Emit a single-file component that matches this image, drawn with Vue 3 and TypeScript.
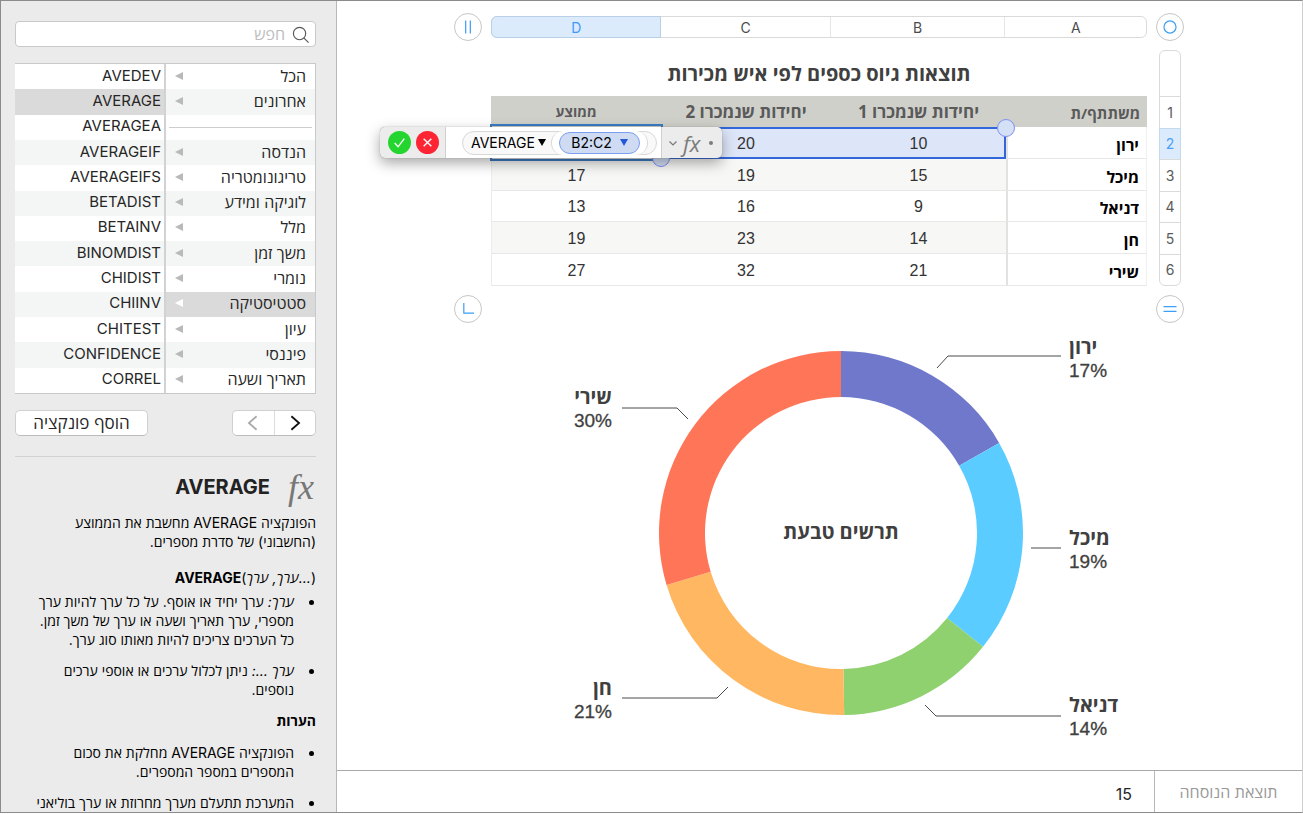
<script setup lang="ts">
interface Category { label: string; active?: boolean; separator?: boolean }
interface Person { name: string; first: number; second: number; average: number | null }
interface Slice {
  name: string
  value: number
  share: string
  color: string
  leader: string
  x: number
  y: number
  anchor: 'start' | 'end'
}

const functions: string[] = [
  'AVEDEV', 'AVERAGE', 'AVERAGEA', 'AVERAGEIF', 'AVERAGEIFS', 'BETADIST', 'BETAINV',
  'BINOMDIST', 'CHIDIST', 'CHIINV', 'CHITEST', 'CONFIDENCE', 'CORREL',
]

const categories: Category[] = [
  { label: 'הכל' },
  { label: 'אחרונים' },
  { label: '', separator: true },
  { label: 'הנדסה' },
  { label: 'טריגונומטריה' },
  { label: 'לוגיקה ומידע' },
  { label: 'מלל' },
  { label: 'משך זמן' },
  { label: 'נומרי' },
  { label: 'סטטיסטיקה', active: true },
  { label: 'עיון' },
  { label: 'פיננסי' },
  { label: 'תאריך ושעה' },
]

const columns: string[] = ['A', 'B', 'C', 'D']
const rowNumbers: number[] = [1, 2, 3, 4, 5, 6]

const people: Person[] = [
  { name: 'ירון', first: 10, second: 20, average: null },
  { name: 'מיכל', first: 15, second: 19, average: 17 },
  { name: 'דניאל', first: 9, second: 16, average: 13 },
  { name: 'חן', first: 14, second: 23, average: 19 },
  { name: 'שירי', first: 21, second: 32, average: 27 },
]

const slices: Slice[] = [
  { name: 'ירון', value: 15, share: '17%', color: '#6f78cb', leader: '600,45 611,33 724,33', x: 732, y: 31, anchor: 'start' },
  { name: 'מיכל', value: 17, share: '19%', color: '#5accff', leader: '694,225 724,225', x: 732, y: 222, anchor: 'start' },
  { name: 'דניאל', value: 12.5, share: '14%', color: '#8fd16f', leader: '588,382 599,393 724,393', x: 732, y: 389, anchor: 'start' },
  { name: 'חן', value: 18.5, share: '21%', color: '#ffb761', leader: '391,364 380,375 285,375', x: 275, y: 372, anchor: 'end' },
  { name: 'שירי', value: 26.5, share: '30%', color: '#ff7558', leader: '351,96 340,85 285,85', x: 275, y: 81, anchor: 'end' },
]

const center = { x: 504, y: 210 }
const outer = 182
const inner = 136
const total = slices.reduce((sum, slice) => sum + slice.value, 0)

function point(radius: number, turn: number): string {
  const angle = turn * 2 * Math.PI
  return `${center.x + radius * Math.sin(angle)} ${center.y - radius * Math.cos(angle)}`
}

const arcs = slices.map((slice, index) => {
  const start = slices.slice(0, index).reduce((sum, item) => sum + item.value, 0) / total
  const end = start + slice.value / total
  return {
    color: slice.color,
    d: `M${point(outer, start)} A${outer} ${outer} 0 0 1 ${point(outer, end)} L${point(inner, end)} A${inner} ${inner} 0 0 0 ${point(inner, start)}Z`,
  }
})
</script>

<template>
  <div class="window" dir="rtl">
    <div class="workspace">
      <main class="canvas">
        <section class="sheet">
          <button class="knob" aria-label="בחירת הטבלה">
            <svg viewBox="0 0 28 28"><circle cx="14" cy="14" r="6.5" /></svg>
          </button>
          <div class="column-bar">
            <button v-for="column in columns" :key="column" :class="{ current: column === 'D' }">{{ column }}</button>
          </div>
          <button class="knob" aria-label="הוספת עמודה">
            <svg viewBox="0 0 28 28"><path d="M11.5 7v14M16.5 7v14" /></svg>
          </button>

          <div class="row-bar">
            <span></span>
            <button v-for="row in rowNumbers" :key="row" :class="{ current: row === 2 }">{{ row }}</button>
          </div>
          <div class="table-area">
            <h2>תוצאות גיוס כספים לפי איש מכירות</h2>
            <table>
              <colgroup>
                <col class="col-a" /><col class="col-b" /><col class="col-c" /><col class="col-d" />
              </colgroup>
              <thead>
                <tr>
                  <th scope="col">משתתף/ת</th>
                  <th scope="col" class="units">יחידות שנמכרו 1</th>
                  <th scope="col" class="units">יחידות שנמכרו 2</th>
                  <th scope="col" class="mean">ממוצע</th>
                </tr>
              </thead>
              <tbody>
                <tr v-for="person in people" :key="person.name">
                  <th scope="row">{{ person.name }}</th>
                  <td :class="{ 'range-start': person.average === null }">{{ person.first }}</td>
                  <td :class="{ 'range-end': person.average === null }">{{ person.second }}</td>
                  <td v-if="person.average !== null">{{ person.average }}</td>
                  <td v-else class="editing">
                    <div class="editor" dir="ltr">
                      <div class="actions">
                        <button class="accept" aria-label="אישור">
                          <svg viewBox="0 0 24 24"><path d="M7 12.5l3.5 4L17 8" /></svg>
                        </button>
                        <button class="cancel" aria-label="ביטול">
                          <svg viewBox="0 0 24 24"><path d="M8 8l8 8M16 8l-8 8" /></svg>
                        </button>
                      </div>
                      <div class="formula">
                        <div class="call">
                          <button class="name">AVERAGE<i></i></button>
                          <div class="argument"><button class="token">B2:C2<i></i></button></div>
                        </div>
                      </div>
                      <div class="mode">
                        <svg viewBox="0 0 10 10"><path d="M1.5 3.5L5 7l3.5-3.5" /></svg>
                        <em>fx</em>
                        <b></b>
                      </div>
                    </div>
                  </td>
                </tr>
              </tbody>
            </table>
          </div>
          <span></span>

          <button class="knob" aria-label="הוספת שורה">
            <svg viewBox="0 0 28 28"><path d="M7 11.5h14M7 16.5h14" /></svg>
          </button>
          <span></span>
          <button class="knob" aria-label="הוספת שורה ועמודה">
            <svg viewBox="0 0 28 28"><path d="M9.5 7.5v11h11" /></svg>
          </button>
        </section>

        <svg class="chart" viewBox="0 0 965 447" direction="ltr" role="img" aria-label="תרשים טבעת">
          <path v-for="arc in arcs" :key="arc.color" :d="arc.d" :fill="arc.color" />
          <text class="chart-title" :x="center.x" :y="center.y + 6" text-anchor="middle">תרשים טבעת</text>
          <g v-for="slice in slices" :key="slice.name">
            <polyline :points="slice.leader" />
            <text class="slice-name" :x="slice.x" :y="slice.y" :text-anchor="slice.anchor">{{ slice.name }}</text>
            <text class="slice-share" :x="slice.x" :y="slice.y + 23" :text-anchor="slice.anchor">{{ slice.share }}</text>
          </g>
        </svg>
      </main>
      <footer class="result">
        <span class="result-label">תוצאת הנוסחה</span>
        <output>15</output>
      </footer>
    </div>

    <aside class="sidebar">
      <label class="search">
        <svg viewBox="0 0 18 18"><circle cx="8" cy="8" r="6.5" /><path d="M12.5 12.5l5 5" /></svg>
        <input type="text" placeholder="חפש" aria-label="חפש" />
      </label>
      <div class="browser">
        <ul class="categories">
          <li v-for="(category, index) in categories" :key="index" :class="{ active: category.active }">
            <hr v-if="category.separator" />
            <button v-else>{{ category.label }}<i></i></button>
          </li>
        </ul>
        <ul class="functions">
          <li v-for="name in functions" :key="name" :class="{ active: name === 'AVERAGE' }">
            <button>{{ name }}</button>
          </li>
        </ul>
      </div>
      <div class="toolbar">
        <div class="history">
          <button aria-label="הקודם"><svg viewBox="0 0 20 20"><path d="M6 2.5l8.5 7.5L6 17.5" /></svg></button>
          <button aria-label="הבא" disabled><svg viewBox="0 0 20 20"><path d="M14 2.5L5.5 10l8.5 7.5" /></svg></button>
        </div>
        <button class="insert">הוסף פונקציה</button>
      </div>
      <article class="help">
        <h1><em>fx</em><span>AVERAGE</span></h1>
        <p>הפונקציה AVERAGE מחשבת את הממוצע (החשבוני) של סדרת מספרים.</p>
        <p class="signature" dir="ltr"><b>AVERAGE</b>(<i dir="rtl">ערך, ערך</i><i>…</i>)</p>
        <ul>
          <li><i>ערך:</i> ערך יחיד או אוסף. על כל ערך להיות ערך מספרי, ערך תאריך ושעה או ערך של משך זמן. כל הערכים צריכים להיות מאותו סוג ערך.</li>
          <li><i>ערך …:</i> ניתן לכלול ערכים או אוספי ערכים נוספים.</li>
        </ul>
        <h3>הערות</h3>
        <ul>
          <li>הפונקציה AVERAGE מחלקת את סכום המספרים במספר המספרים.</li>
          <li>המערכת תתעלם מערך מחרוזת או ערך בוליאני</li>
        </ul>
      </article>
    </aside>
  </div>
</template>

<style>
body { margin: 0; }
</style>

<style scoped>
* { box-sizing: border-box; }
button, input { font: inherit; color: inherit; margin: 0; padding: 0; border: 0; background: none; }
ul { list-style: none; margin: 0; padding: 0; }
svg { display: block; fill: none; }

.window {
  display: flex;
  height: calc(100vh - 1px);
  overflow: hidden;
  border: 1px solid #8b8a8c;
  border-right-color: #cfcfcf;
  background: #fff;
  font: 14px/19px Inter, "Open Sans", sans-serif;
  color: #262626;
}

.workspace { flex: 1; min-width: 0; display: flex; flex-direction: column; }
.canvas { flex: 1; min-height: 0; display: flex; flex-direction: column; }

.sheet {
  display: grid;
  grid-template-columns: 28px 1fr 28px;
  gap: 9px;
  padding: 12px 118px 0 117px;
}
.knob {
  width: 28px;
  height: 28px;
  border: 1px solid #c6c6c6;
  border-radius: 50%;
  background: #fff;
}
.knob svg { width: 26px; height: 26px; stroke: #3b9ff5; stroke-width: 1.3; }

.column-bar {
  align-self: center;
  height: 22px;
  display: grid;
  grid-template-columns: 141fr 175fr 170fr 170fr;
  border: 1px solid #dadada;
  border-radius: 6px;
  font-size: 14px;
  color: #4c4c4c;
}
.column-bar button + button { border-right: 1px solid #e6e6e6; }
.column-bar .current {
  margin: -1px 0 -1px -1px;
  border: 1px solid #b8cfe8;
  border-radius: 6px 0 0 6px;
  background: #dcebfc;
  color: #3e9bfa;
}

.row-bar {
  justify-self: center;
  width: 22px;
  display: grid;
  grid-template-rows: 45px repeat(6, 1fr);
  border: 1px solid #dadada;
  border-radius: 6px;
  font-size: 14px;
  color: #5a5a5a;
}
.row-bar button { border-top: 1px solid #dadada; }
.row-bar .current { margin: 0 -1px; border: 1px solid #c3d9ee; border-bottom: 0; background: #dcebfc; color: #4aa0fa; }

.table-area { display: flex; flex-direction: column; }
h2 { margin: 0; height: 46px; font: 700 20px/48px "Open Sans", sans-serif; color: #404040; text-align: center; }
table { width: 100%; height: 190px; table-layout: fixed; border-collapse: separate; border-spacing: 0; font: 16px/20px "Liberation Sans", sans-serif; }
.col-a { width: 141px; }
.col-b { width: 175px; }
.col-c, .col-d { width: 170px; }
th, td { height: 31px; padding: 0; text-align: center; border-bottom: 1px solid #e8e8e8; }
tbody td { padding-top: 3px; color: #333; }
thead th { background: #d0d0cb; border-bottom: 0; color: #5a5a5a; font: 700 15px/20px "Open Sans", sans-serif; }
thead .units { font-size: 17px; }
thead .mean { font-size: 14px; }
thead th:first-child, tbody th { padding: 3px 7px 0 0; text-align: right; }
tbody th { padding-top: 5px; border-right: 1px solid #f0f0f0; border-left: 2px solid #e2e2e0; font: 700 16px/20px "Open Sans", sans-serif; color: #000; }
tbody tr:nth-child(even) td { background: #f7f7f5; }
tbody td:last-child { border-left: 1px solid #ececec; }

tbody td.range-start, tbody td.range-end { position: relative; background: #dde6f9; border-bottom: 0; box-shadow: inset 0 2px #3266dd, inset 0 -2px #3266dd; }
tbody td.range-start { box-shadow: inset 0 2px #3266dd, inset 0 -2px #3266dd, inset -2px 0 #3266dd; }
td.range-start::after, td.editing::after {
  content: "";
  position: absolute;
  width: 16px;
  height: 16px;
  border: 1px solid #7f8ff0;
  border-radius: 50%;
  background: #d3e0f6;
}
td.range-start::after { top: -8px; right: -9px; }
td.editing { position: relative; z-index: 2; }
td.editing::after { right: -9px; bottom: -9px; z-index: -1; }
td.editing::before { content: ""; position: absolute; inset: -3px -2px; border: 2px solid #3a7cc4; z-index: -1; }

.editor {
  position: absolute;
  top: 0;
  right: -61px;
  width: 342px;
  height: 31px;
  display: flex;
  border-radius: 5px;
  background: #ececec;
  box-shadow: 0 0 1px #777, 0 5px 14px rgba(0, 0, 0, 0.35);
  font: 14px/20px Inter, sans-serif;
  color: #000;
}
.actions { width: 66px; display: flex; gap: 5px; align-items: center; padding-left: 8px; border-right: 1px solid #d0d0d0; }
.actions button { width: 23px; height: 23px; border-radius: 50%; }
.actions svg { width: 23px; height: 23px; stroke: #fff; stroke-width: 1.4; }
.accept { background: #25d52f; }
.cancel { background: #fd2434; }
.formula { flex: 1; display: flex; align-items: center; padding: 0 4px 0 16px; background: #fff; border-right: 1px solid #d0d0d0; }
.call { flex: 1; height: 24px; display: flex; align-items: center; padding: 0 8px; border: 1px solid #d8d8d8; border-radius: 12px; background: #f9f9f9; }
.name { flex: 1; text-align: left; white-space: nowrap; }
.editor i { display: inline-block; margin-left: 3px; vertical-align: 2px; border: 4px solid transparent; border-top: 7px solid #000; border-bottom: 0; }
.argument { height: 24px; margin: -1px 0; padding: 1px 7px; border: solid #d8d8d8; border-width: 0 1px; border-radius: 12px; background: #fff; }
.token { display: block; width: 81px; height: 22px; border: 1px solid #7c9eee; border-radius: 11px; background: #cfdbf3; }
.editor .token i { margin-left: 8px; border-top-color: #2158d6; }
.mode { width: 60px; display: flex; align-items: center; color: #7c7c7c; padding-left: 6px; }
.mode svg { width: 10px; height: 10px; stroke: #777; stroke-width: 1.2; }
.mode em { margin-left: 5px; font: italic 22px/24px "Open Sans", sans-serif; }
.mode b { width: 4px; height: 4px; margin-left: 9px; border-radius: 50%; background: #7c7c7c; }

.chart { flex: 1; width: 100%; min-height: 0; }
.chart text { direction: ltr; fill: #404040; }
.chart-title, .slice-name { font: 700 20px "Open Sans", sans-serif; }
.slice-share { font: 19px "Liberation Sans", sans-serif; stroke: #404040; stroke-width: 0.3; }
polyline { stroke: #4a4a4a; stroke-width: 1; }

.result { height: 42px; display: flex; border-top: 1px solid #a8a8a8; line-height: 42px; }
.result-label { width: 148px; text-align: center; border-left: 1px solid #b8b8b8; color: #999; font-size: 16px; }
.result output { padding: 2px 22px 0 0; font-size: 16px; }

.sidebar {
  width: 336px;
  flex: none;
  padding: 20px 20px 0 14px;
  border-right: 1px solid #b8b8b8;
  background: #ebebeb;
  overflow: hidden;
}
.search { display: flex; align-items: center; height: 26px; padding: 0 6px; border: 1px solid #c9c9c9; border-radius: 4px; background: #fff; }
.search svg { width: 17px; height: 17px; stroke: #555; stroke-width: 1.2; }
.search input { flex: 1; min-width: 0; padding: 0 7px; font-size: 16px; outline: 0; }
.search input::placeholder { color: #bdbdbd; opacity: 1; }

.browser { display: flex; height: 331px; margin-top: 16px; border: 1px solid #c9c9c9; border-left: 0; background: #fff; }
.browser ul { flex: 1; display: grid; grid-auto-rows: 1fr; font-size: 15px; }
.browser .categories { border-left: 2px solid #d2d2d2; font-size: 16px; }
.browser li { display: flex; align-items: center; min-height: 0; }
.browser li:nth-child(even) { background: #f4f6f5; }
.browser li.active { background: #dadada; }
.browser button { flex: 1; display: flex; align-items: center; justify-content: space-between; padding: 0 9px 2px; line-height: 22px; }
.browser .functions button { padding: 0 3px 2px; }
.browser i { border: 4px solid transparent; border-right: 8px solid #b9b9b9; border-left: 0; }
.browser .active i { border-right-color: #fff; }
.browser hr { flex: 1; margin: 0 3px; border: 0; border-top: 1px solid #cecece; }

.toolbar { display: flex; justify-content: space-between; margin-top: 16px; padding-bottom: 20px; border-bottom: 1px solid #d2d2d2; }
.history, .insert { height: 26px; border: 1px solid #d0d0d0; border-bottom-color: #bcbcbc; border-radius: 5px; background: #fff; }
.history { width: 84px; display: flex; }
.history button { flex: 1; display: grid; place-items: center; }
.history button + button { border-right: 1px solid #dcdcdc; }
.history svg { width: 18px; height: 18px; stroke: #111; stroke-width: 2; }
.history :disabled svg { stroke: #aaa; }
.insert { width: 133px; font-size: 17px; }

.help { color: #000; font-size: 14px; }
.help h1 { display: flex; align-items: center; gap: 18px; height: 56px; margin: 0; padding: 4px 2px 0 0; font: 700 20px/24px Inter, sans-serif; color: #222; }
.help h1 em { font: italic 36px/36px "Liberation Serif", serif; color: #777; }
.help p { margin: 0 0 17px; }
.help .signature { margin-bottom: 5px; text-align: right; }
.help li { position: relative; padding: 0 22px 0 10px; margin-bottom: 12px; }
.help li::before { content: ""; position: absolute; right: 2px; top: 8px; width: 5px; height: 5px; border-radius: 50%; background: #000; }
.help h3 { margin: 0 0 13px; font: 700 14px/19px Inter, "Open Sans", sans-serif; }
</style>
